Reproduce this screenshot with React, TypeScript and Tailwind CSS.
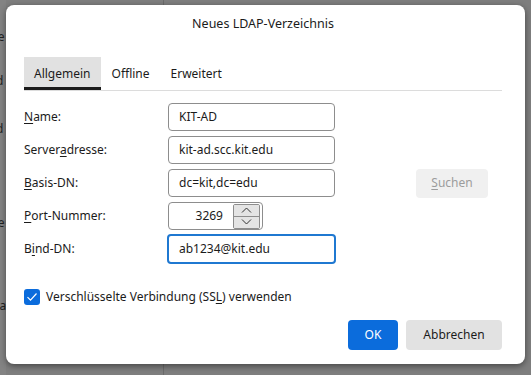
import React from 'react';

const font = { fontFamily: '"Noto Sans", "Open Sans", sans-serif' };

// underline one letter as the mnemonic, like Windows dialogs do
const Mn = ({ c }: { c: string }) => <span className="underline underline-offset-2">{c}</span>;

const Field = ({ value, focused = false }: { value: string; focused?: boolean }) => (
  <div
    className={
      focused
        ? 'w-[169px] h-[30px] -my-px -ml-px border-2 border-[#1f78d1] rounded-[4px] flex items-center pl-[10px] bg-white'
        : 'w-[167px] h-[28px] border border-[#8d8d8d] rounded-[4px] flex items-center pl-[10px] bg-white'
    }
  >
    {value}
  </div>
);

const Row = ({ label, children }: { label: React.ReactNode; children: React.ReactNode }) => (
  <div className="flex items-center h-[28px]">
    <div className="w-[144px]">{label}</div>
    {children}
  </div>
);

export default function App() {
  return (
    <div className="relative w-[531px] h-[375px] overflow-hidden bg-[#7e7e7e] text-[12px] text-[#1b1b1b]" style={font}>
      {/* dimmed window behind the dialog */}
      <div className="absolute left-[163px] top-0 bottom-0 w-px bg-[#6b6b6b]" />
      <div className="absolute left-0 top-0 w-[6px] h-full bg-[#838383]" />
      <span className="absolute left-[-8px] top-[28px] text-[#222]">se</span>
      <span className="absolute left-[-4px] top-[72px] text-[#222]">d</span>
      <span className="absolute left-[-4px] top-[120px] text-[#222]">d</span>
      <span className="absolute left-[-8px] top-[214px] text-[#222]">ce</span>
      <span className="absolute left-[-8px] top-[297px] text-[#222]">na</span>

      <div className="relative ml-[6px] mt-[5px] w-[519px] h-[359px] bg-white rounded-[8px] shadow-[0_2px_6px_rgba(0,0,0,0.45)] pl-[18px] pr-[23px] flex flex-col">
        <div className="h-[38px] flex items-center justify-center text-[12.5px] text-[#1b1b1b]">Neues LDAP-Verzeichnis</div>

        <div className="mt-[14px] flex border-b border-[#dcdcdc] h-[34px]">
          <div className="h-[33px] px-[10px] flex items-center bg-[#e1e1e1] border-b-[3px] border-[#1b1b1b] pt-[3px]">Allgemein</div>
          <div className="h-[33px] px-[11px] flex items-center">Offline</div>
          <div className="h-[33px] px-[10px] flex items-center">Erweitert</div>
        </div>

        <div className="mt-[12px] flex flex-col gap-[5px]">
          <Row label={<><Mn c="N" />ame:</>}>
            <Field value="KIT-AD" />
          </Row>
          <Row label={<>Server<Mn c="a" />dresse:</>}>
            <Field value="kit-ad.scc.kit.edu" />
          </Row>
          <Row label={<><Mn c="B" />asis-DN:</>}>
            <Field value="dc=kit,dc=edu" />
            <div className="ml-[81px] w-[72px] h-[29px] rounded-[4px] bg-[#f0f0f0] text-[#9c9c9c] flex items-center justify-center">
              <span><span className="underline underline-offset-2">S</span>uchen</span>
            </div>
          </Row>
          <Row label={<><Mn c="P" />ort-Nummer:</>}>
            <div className="w-[95px] h-[28px] border border-[#8d8d8d] rounded-[4px] flex items-center bg-white">
              <div className="w-[54px] text-right">3269</div>
              <div className="ml-[10px] w-[27px] h-[25px] border border-[#8d8d8d] rounded-[2px] flex flex-col overflow-hidden">
                <div className="flex-1 bg-[#e4e4e4] border-b border-[#8d8d8d] flex items-center justify-center">
                  <svg width="11" height="6" viewBox="0 0 11 6" fill="none" stroke="#333" strokeWidth="1"><path d="M1 5.5 5.5 1 10 5.5" /></svg>
                </div>
                <div className="flex-1 bg-[#e4e4e4] flex items-center justify-center">
                  <svg width="11" height="6" viewBox="0 0 11 6" fill="none" stroke="#333" strokeWidth="1"><path d="M1 .5 5.5 5 10 .5" /></svg>
                </div>
              </div>
            </div>
          </Row>
          <Row label={<>B<Mn c="i" />nd-DN:</>}>
            <Field value="ab1234@kit.edu" focused />
          </Row>
        </div>

        <div className="mt-[26px] flex items-center h-[16px]">
          <div className="w-[16px] h-[16px] rounded-[3px] bg-[#0b6cdc] flex items-center justify-center">
            <svg width="12" height="10" viewBox="0 0 12 10" fill="none" stroke="white" strokeWidth="1.2"><path d="M1.5 5.2 4.5 8.2 10.5 1.5" /></svg>
          </div>
          <span className="ml-[6px]">Verschlüsselte Verbindung (SS<Mn c="L" />) verwenden</span>
        </div>

        <div className="mt-[15px] flex justify-end gap-[8px]">
          <div className="w-[50px] h-[30px] rounded-[4px] bg-[#0b6cdc] text-white flex items-center justify-center">OK</div>
          <div className="w-[96px] h-[30px] rounded-[4px] bg-[#e2e2e2] flex items-center justify-center">Abbrechen</div>
        </div>
      </div>
    </div>
  );
}
